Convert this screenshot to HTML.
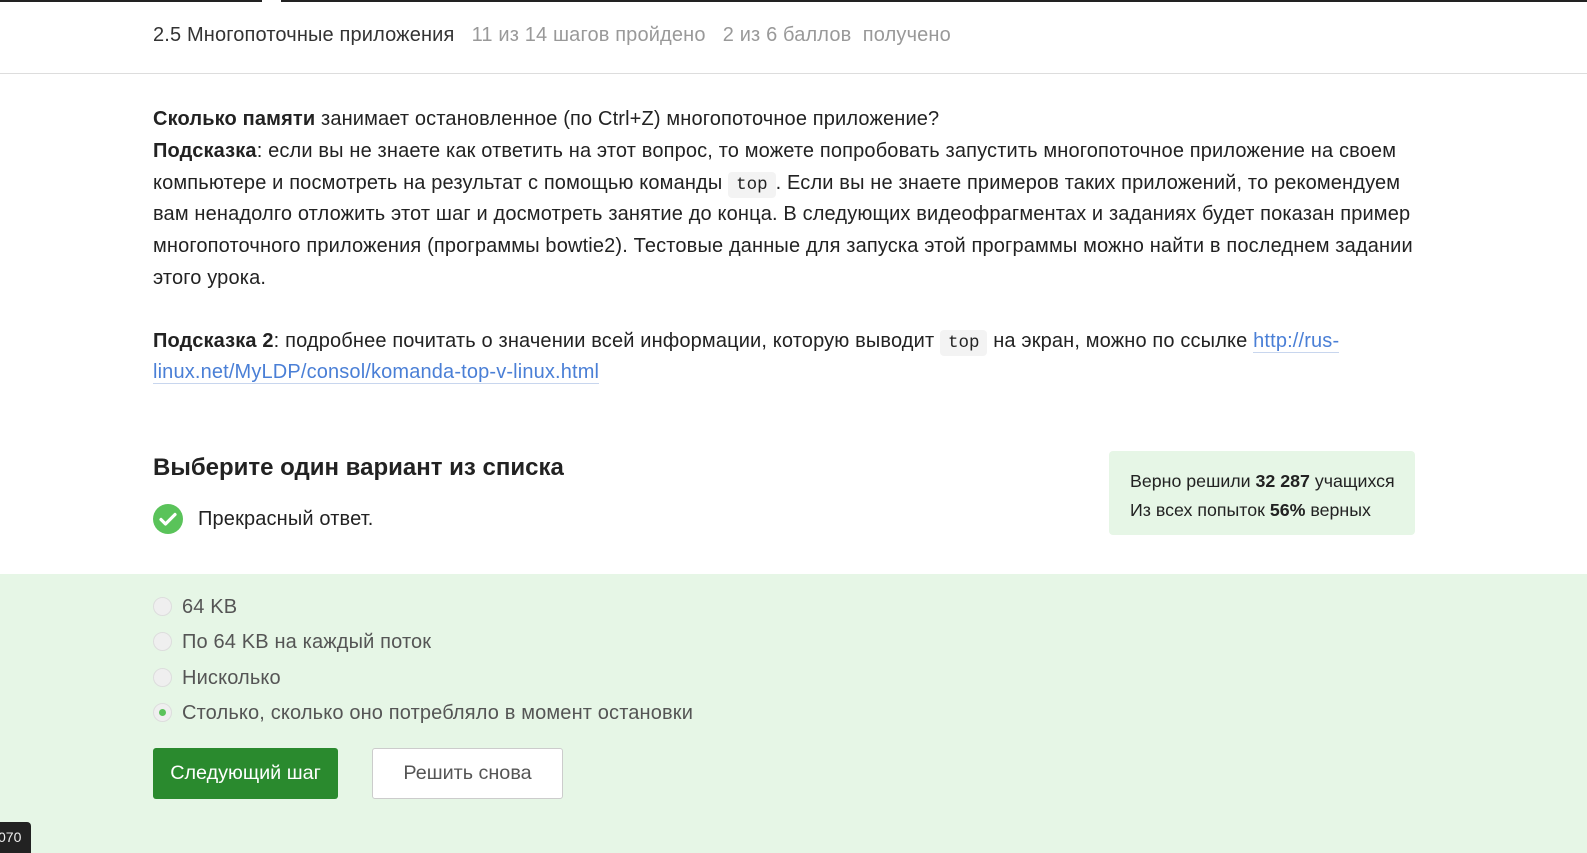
<!DOCTYPE html>
<html><head><meta charset="utf-8"><style>
*{margin:0;padding:0;box-sizing:border-box}
body{width:1587px;height:853px;overflow:hidden;background:#fff;font-family:"Liberation Sans","Noto Sans CJK SC",sans-serif;color:#222;position:relative}
.topline{position:absolute;top:0;left:0;height:2px;background:#222}
.hdr{position:absolute;top:24px;left:153px;font-size:20px;letter-spacing:0.15px;color:#333;white-space:nowrap}
.hdr span{color:#999}
.sep{position:absolute;top:73px;left:0;width:1587px;height:1px;background:#ddd}
.ln{position:absolute;left:153px;font-size:20px;letter-spacing:0.15px;white-space:nowrap;color:#222}
code{font-family:"Liberation Mono",monospace;font-size:17.5px;letter-spacing:0;background:#f3f3f3;border-radius:4px;padding:3px 8px}
a{color:#4a7fd6;text-decoration:none;border-bottom:1.5px solid #c8d6ee}
.green{position:absolute;top:574px;left:0;width:1587px;height:279px;background:#e6f6e6}
.opt{position:absolute;left:153px;font-size:20px;letter-spacing:0.15px;color:#555;white-space:nowrap}
.rad{display:inline-block;width:19px;height:19px;border-radius:50%;background:#efefef;border:1px solid #ddd;vertical-align:-3px;margin-right:10px;position:relative}
.rad.on::after{content:"";position:absolute;left:5px;top:5px;width:7px;height:7px;border-radius:50%;background:#5ac35a}
</style></head><body>
<div class="topline" style="width:262px"></div>
<div class="topline" style="left:281px;width:1306px"></div>
<div class="hdr">2.5 Многопоточные приложения &nbsp;&nbsp;<span>11 из 14 шагов пройдено &nbsp;&nbsp;2 из 6 баллов &nbsp;получено</span></div>
<div class="sep"></div>
<div class="ln" style="top:108px"><b>Сколько памяти</b> занимает остановленное (по Ctrl+Z) многопоточное приложение?</div>
<div class="ln" style="top:140px"><b>Подсказка</b>: если вы не знаете как ответить на этот вопрос, то можете попробовать запустить многопоточное приложение на своем</div>
<div class="ln" style="top:172px">компьютере и посмотреть на результат с помощью команды <code>top</code>. Если вы не знаете примеров таких приложений, то рекомендуем</div>
<div class="ln" style="top:203px">вам ненадолго отложить этот шаг и досмотреть занятие до конца. В следующих видеофрагментах и заданиях будет показан пример</div>
<div class="ln" style="top:235px">многопоточного приложения (программы bowtie2). Тестовые данные для запуска этой программы можно найти в последнем задании</div>
<div class="ln" style="top:267px">этого урока.</div>
<div class="ln" style="top:330px"><b>Подсказка 2</b>: подробнее почитать о значении всей информации, которую выводит <code>top</code> на экран, можно по ссылке <a>http://rus-</a></div>
<div class="ln" style="top:361px"><a>linux.net/MyLDP/consol/komanda-top-v-linux.html</a></div>
<div class="ln" style="top:454px;font-size:24px;letter-spacing:0;font-weight:bold;color:#222">Выберите один вариант из списка</div>
<div style="position:absolute;left:153px;top:504px;width:30px;height:30px;border-radius:50%;background:#5ac35a">
<svg width="30" height="30" viewBox="0 0 30 30"><path d="M8 15.5l4.5 4.5L22 10.5" stroke="#fff" stroke-width="3.2" fill="none" stroke-linecap="round" stroke-linejoin="round"/></svg></div>
<div class="ln" style="top:508px;left:198px">Прекрасный ответ.</div>
<div style="position:absolute;left:1109px;top:451px;width:306px;height:84px;background:#e6f6e6;border-radius:4px;font-size:17.8px;color:#222;padding:16px 0 0 21px;line-height:29px;white-space:nowrap">Верно решили <b>32 287</b> учащихся<br>Из всех попыток <b>56%</b> верных</div>
<div class="green"></div>
<div class="opt" style="top:596px"><span class="rad"></span>64 KB</div>
<div class="opt" style="top:631px"><span class="rad"></span>По 64 KB на каждый поток</div>
<div class="opt" style="top:667px"><span class="rad"></span>Нисколько</div>
<div class="opt" style="top:702px"><span class="rad on"></span>Столько, сколько оно потребляло в момент остановки</div>
<div style="position:absolute;left:153px;top:748px;width:185px;height:51px;background:#2a8a2e;border-radius:3px;color:#fff;font-size:19.8px;text-align:center;line-height:51px">Следующий шаг</div>
<div style="position:absolute;left:372px;top:748px;width:191px;height:51px;background:#fff;border:1px solid #ccc;border-radius:3px;color:#555;font-size:19.8px;text-align:center;line-height:49px">Решить снова</div>
<div style="position:absolute;left:0;top:822px;width:31px;height:31px;background:#222;border-radius:0 4px 0 0;color:#eee;font-size:14px;line-height:26px;padding-top:2px;text-indent:-2px">070</div>
</body></html>
